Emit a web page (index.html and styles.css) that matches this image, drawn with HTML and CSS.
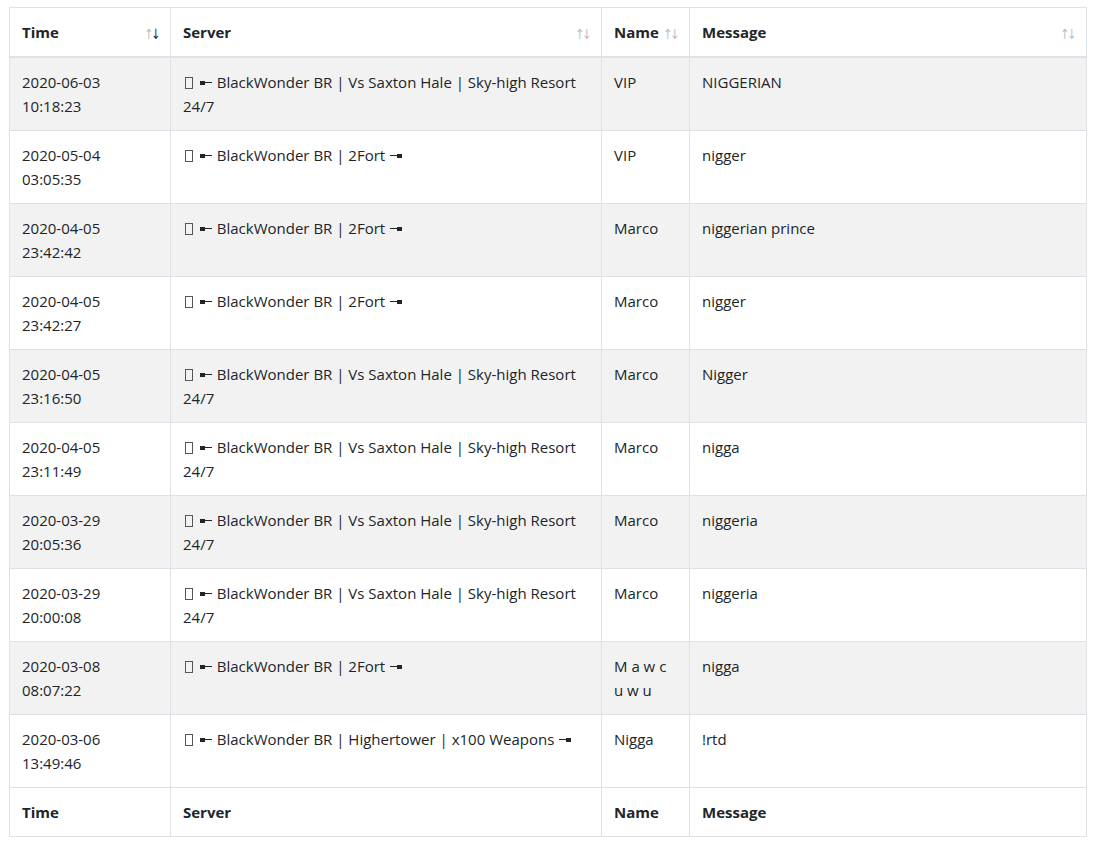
FILE: index.html
```html
<!DOCTYPE html>
<html>
<head>
<meta charset="utf-8">
<link rel="stylesheet" href="styles.css">
</head>
<body>
<div class="wrap">
<table class="log">
  <colgroup>
    <col class="c-time"><col class="c-server"><col class="c-name"><col class="c-msg">
  </colgroup>
  <thead>
    <tr>
      <th class="sort desc">Time</th>
      <th class="sort">Server</th>
      <th class="sort">Name</th>
      <th class="sort">Message</th>
    </tr>
  </thead>
  <tbody>
    <tr><td>2020-06-03 10:18:23</td><td><span class="tofu"></span> <span class="pipe-l"></span> BlackWonder BR | Vs Saxton Hale | Sky-high Resort 24/7</td><td>VIP</td><td>NIGGERIAN</td></tr>
    <tr><td>2020-05-04 03:05:35</td><td><span class="tofu"></span> <span class="pipe-l"></span> BlackWonder BR | 2Fort <span class="pipe-r"></span></td><td>VIP</td><td>nigger</td></tr>
    <tr><td>2020-04-05 23:42:42</td><td><span class="tofu"></span> <span class="pipe-l"></span> BlackWonder BR | 2Fort <span class="pipe-r"></span></td><td>Marco</td><td>niggerian prince</td></tr>
    <tr><td>2020-04-05 23:42:27</td><td><span class="tofu"></span> <span class="pipe-l"></span> BlackWonder BR | 2Fort <span class="pipe-r"></span></td><td>Marco</td><td>nigger</td></tr>
    <tr><td>2020-04-05 23:16:50</td><td><span class="tofu"></span> <span class="pipe-l"></span> BlackWonder BR | Vs Saxton Hale | Sky-high Resort 24/7</td><td>Marco</td><td>Nigger</td></tr>
    <tr><td>2020-04-05 23:11:49</td><td><span class="tofu"></span> <span class="pipe-l"></span> BlackWonder BR | Vs Saxton Hale | Sky-high Resort 24/7</td><td>Marco</td><td>nigga</td></tr>
    <tr><td>2020-03-29 20:05:36</td><td><span class="tofu"></span> <span class="pipe-l"></span> BlackWonder BR | Vs Saxton Hale | Sky-high Resort 24/7</td><td>Marco</td><td>niggeria</td></tr>
    <tr><td>2020-03-29 20:00:08</td><td><span class="tofu"></span> <span class="pipe-l"></span> BlackWonder BR | Vs Saxton Hale | Sky-high Resort 24/7</td><td>Marco</td><td>niggeria</td></tr>
    <tr><td>2020-03-08 08:07:22</td><td><span class="tofu"></span> <span class="pipe-l"></span> BlackWonder BR | 2Fort <span class="pipe-r"></span></td><td>M a w c u w u</td><td>nigga</td></tr>
    <tr><td>2020-03-06 13:49:46</td><td><span class="tofu"></span> <span class="pipe-l"></span> BlackWonder BR | Highertower | x100 Weapons <span class="pipe-r"></span></td><td>Nigga</td><td>!rtd</td></tr>
  </tbody>
  <tfoot>
    <tr><th>Time</th><th>Server</th><th>Name</th><th>Message</th></tr>
  </tfoot>
</table>
</div>
</body>
</html>
```
FILE: styles.css
```css
html, body {
  margin: 0;
  padding: 0;
  background: #fff;
}
body {
  font-family: "Open Sans", "Noto Sans", "Liberation Sans", sans-serif;
  font-size: 15px;
  line-height: 24px;
  color: #212529;
}
.wrap {
  padding: 7px 12px 0 9px;
}
.log {
  width: 1077px;
  border-collapse: collapse;
  table-layout: fixed;
}
.c-time { width: 161px; }
.c-server { width: 431px; }
.c-name { width: 88px; }
.c-msg { width: 397px; }

.log th, .log td {
  border: 1px solid #dee2e6;
  padding: 12px;
  text-align: left;
  vertical-align: top;
  box-sizing: border-box;
}
.log th {
  font-weight: 700;
  font-size: 15px;
}
.log thead th {
  border-bottom: 2px solid #dee2e6;
  position: relative;
  padding-right: 30px;
}
.log td:first-child { padding-right: 30px; }
.log tbody tr:nth-child(odd) td {
  background: #f2f2f2;
}
.log tbody tr { height: 73px; }

.sort::before,
.sort::after {
  position: absolute;
  bottom: 15px;
  font-weight: 400;
  font-size: 14px;
  line-height: 1;
  opacity: 0.3;
  font-family: "DejaVu Sans", sans-serif;
  transform: scaleX(0.8);
}
.sort::before {
  content: "\2191";
  right: 15px;
}
.sort::after {
  content: "\2193";
  right: 8px;
}
.sort.desc::after {
  opacity: 1;
  color: #212529;
}

.tofu {
  display: inline-block;
  width: 8px;
  height: 12px;
  border: 1px solid #555;
  box-sizing: border-box;
  vertical-align: -1px;
  margin-left: 2px;
  margin-right: 2px;
}
.pipe-l,
.pipe-r {
  display: inline-block;
  width: 12px;
  height: 5px;
  vertical-align: 3px;
  margin: 0 1px;
}
.pipe-l {
  background:
    linear-gradient(#212529, #212529) left center / 5px 4px no-repeat,
    linear-gradient(#212529, #212529) left center / 12px 1px no-repeat;
}
.pipe-r {
  background:
    linear-gradient(#212529, #212529) right center / 5px 4px no-repeat,
    linear-gradient(#212529, #212529) left center / 12px 1px no-repeat;
}
```
